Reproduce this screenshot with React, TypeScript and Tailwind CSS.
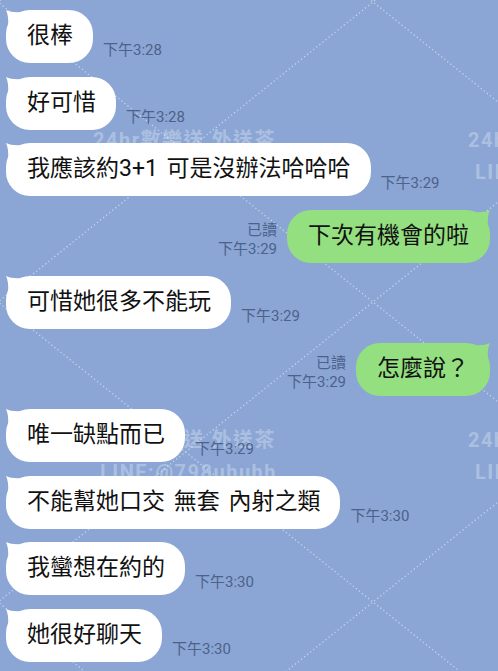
import React from 'react'

type Msg = {
  side: 'l' | 'r'
  text: string
  time: string
  read?: boolean
}

const MESSAGES: Msg[] = [
  { side: 'l', text: '很棒', time: '下午3:28' },
  { side: 'l', text: '好可惜', time: '下午3:28' },
  { side: 'l', text: '我應該約3+1 可是沒辦法哈哈哈', time: '下午3:29' },
  { side: 'r', text: '下次有機會的啦', time: '下午3:29', read: true },
  { side: 'l', text: '可惜她很多不能玩', time: '下午3:29' },
  { side: 'r', text: '怎麼說？', time: '下午3:29', read: true },
  { side: 'l', text: '唯一缺點而已', time: '下午3:29' },
  { side: 'l', text: '不能幫她口交 無套 內射之類', time: '下午3:30' },
  { side: 'l', text: '我蠻想在約的', time: '下午3:30' },
  { side: 'l', text: '她很好聊天', time: '下午3:30' },
]

const FONT = { fontFamily: "Roboto, 'Noto Sans CJK TC', sans-serif" }

// wallpaper: dotted diamond lattice, tile 375 x 300
function Lattice() {
  const lines = []
  for (let k = -1; k <= 3; k++) {
    const y0 = 2 + 300 * k
    // slope +0.8 and -0.8 through (373, y0)
    lines.push(
      <line key={'a' + k} x1={-40} y1={y0 + 0.8 * (-40 - 373)} x2={540} y2={y0 + 0.8 * (540 - 373)} />,
      <line key={'b' + k} x1={-40} y1={y0 - 0.8 * (-40 - 373)} x2={540} y2={y0 - 0.8 * (540 - 373)} />
    )
  }
  return (
    <svg className="absolute inset-0" width="498" height="671" viewBox="0 0 498 671">
      <g stroke="#ffffff" strokeOpacity="0.5" strokeWidth="1.3" strokeDasharray="1.3 2.6">
        {lines}
      </g>
    </svg>
  )
}

function Watermark({ top, left }: { top: number; left: number }) {
  return (
    <div
      className="absolute whitespace-nowrap font-bold text-[20px] leading-[32px] tracking-[1.5px] text-white/30"
      style={{ top, left, ...FONT }}
    >
      <div>24hr數樂送 外送茶</div>
      <div className="pl-[7px]">LINE:@798uhuhh</div>
    </div>
  )
}

function LeftTail() {
  return (
    <svg className="absolute left-0 top-0" width="18" height="18" viewBox="0 0 18 18">
      <path d="M0 0 Q6 3 17 2 L17 17 L2 17 Q3 6 0 0 Z" fill="#ffffff" />
    </svg>
  )
}

function RightTail() {
  return (
    <svg className="absolute right-0 top-0" width="18" height="18" viewBox="0 0 18 18">
      <path d="M18 0 Q12 3 1 2 L1 17 L16 17 Q15 6 18 0 Z" fill="#94df80" />
    </svg>
  )
}

function Row({ m }: { m: Msg }) {
  if (m.side === 'l') {
    return (
      <div className="flex items-end gap-[10px] pl-[6px]">
        <div className="relative flex h-[53px] items-center rounded-[24px] bg-white pl-[21px] pr-[20px] text-[23px] text-[#111111] whitespace-nowrap [word-spacing:3px]">
          <LeftTail />
          <span className="relative">{m.text}</span>
        </div>
        <div className="mb-[3px] text-[15px] leading-[19px] text-[#4b628b] whitespace-nowrap">{m.time}</div>
      </div>
    )
  }
  return (
    <div className="flex items-end justify-end gap-[10px] pr-[8px]">
      <div className="mb-[4px] flex flex-col items-end text-[15px] leading-[19px] text-[#4b628b] whitespace-nowrap">
        {m.read && <span>已讀</span>}
        <span>{m.time}</span>
      </div>
      <div className="relative flex h-[53px] items-center rounded-[24px] bg-[#94df80] px-[21px] text-[23px] text-[#111111] whitespace-nowrap">
        <RightTail />
        <span className="relative">{m.text}</span>
      </div>
    </div>
  )
}

export default function App() {
  return (
    <div className="relative h-[671px] w-full overflow-hidden bg-[#8ba6d4]" style={FONT}>
      <Lattice />
      <Watermark top={124} left={93} />
      <Watermark top={124} left={468} />
      <Watermark top={424} left={93} />
      <Watermark top={424} left={468} />

      <div className="relative flex flex-col gap-[13.5px] pt-[10px]">
        {MESSAGES.map((m, i) => (
          <Row key={i} m={m} />
        ))}
      </div>
    </div>
  )
}
